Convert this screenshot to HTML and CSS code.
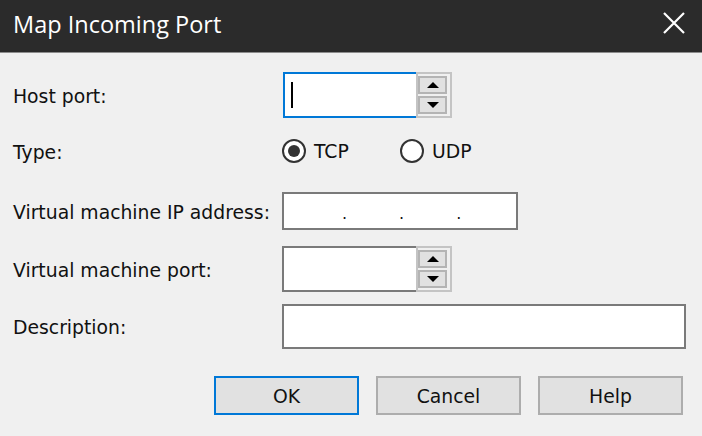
FILE: index.html
```html
<!DOCTYPE html>
<html>
<head>
<meta charset="utf-8">
<link rel="stylesheet" href="styles.css">
</head>
<body>
<div class="dialog">
  <div class="titlebar">
    <span class="title">Map Incoming Port</span>
    <svg class="close" width="22" height="22" viewBox="0 0 22 22"><path d="M1 1L21 21M21 1L1 21" stroke="#ffffff" stroke-width="2.2" fill="none"/></svg>
  </div>
  <div class="form">
    <div class="row r1">
      <span class="label">Host port:</span>
      <div class="spin host">
        <div class="field focus"><span class="caret"></span></div>
        <div class="spinbox">
          <div class="sbtn"><span class="up"></span></div>
          <div class="sbtn"><span class="down"></span></div>
        </div>
      </div>
    </div>
    <div class="row r2">
      <span class="label">Type:</span>
      <div class="radios">
        <div class="radio first"><span class="circle checked"></span><span>TCP</span></div>
        <div class="radio"><span class="circle"></span><span>UDP</span></div>
      </div>
    </div>
    <div class="row r3">
      <span class="label">Virtual machine IP address:</span>
      <div class="ipfield"><span class="dot">.</span><span class="dot">.</span><span class="dot">.</span></div>
    </div>
    <div class="row r4">
      <span class="label">Virtual machine port:</span>
      <div class="spin">
        <div class="field"></div>
        <div class="spinbox">
          <div class="sbtn"><span class="up"></span></div>
          <div class="sbtn"><span class="down"></span></div>
        </div>
      </div>
    </div>
    <div class="row r5">
      <span class="label">Description:</span>
      <div class="descfield"></div>
    </div>
    <div class="buttons">
      <div class="btn default">OK</div>
      <div class="btn">Cancel</div>
      <div class="btn">Help</div>
    </div>
  </div>
</div>
</body>
</html>
```

FILE: styles.css
```css
html, body {
  margin: 0;
  padding: 0;
}
body {
  width: 702px;
  height: 436px;
  overflow: hidden;
  background: #f0f0f0;
  font-family: "DejaVu Sans", sans-serif;
  font-size: 18.8px;
  color: #111;
}
.dialog {
  display: flex;
  flex-direction: column;
  height: 436px;
}
.titlebar {
  height: 53px;
  background: #2b2b2b;
  border-bottom: 1px solid #8c8c8c;
  display: flex;
  align-items: center;
  justify-content: space-between;
  padding: 0 17px 0 13px;
  box-sizing: border-box;
  flex: none;
}
.title {
  font-family: "Open Sans", sans-serif;
  font-size: 23.5px;
  color: #ffffff;
  margin-top: -4px;
}
.close {
  margin-top: -6px;
}
.form {
  padding: 19px 0 0 13px;
  display: flex;
  flex-direction: column;
}
.row {
  display: flex;
  align-items: center;
}
.label {
  width: 269px;
  flex: none;
  padding-top: 2px;
}
.r1 { height: 46px; }
.r2 { height: 24px; margin-top: 21px; }
.r3 { height: 38px; margin-top: 29px; }
.r4 { height: 46px; margin-top: 16px; }
.r5 { height: 45px; margin-top: 12px; }

.spin {
  display: flex;
  width: 170px;
  height: 46px;
}
.spin.host {
  width: 169px;
  margin-left: 1px;
}
.field {
  flex: 1;
  background: #fff;
  border: 2px solid #7a7a7a;
  border-right: none;
  display: flex;
  align-items: center;
  padding-left: 6px;
}
.field.focus {
  border-color: #0078d7;
}
.caret {
  width: 2px;
  height: 26px;
  background: #000;
}
.spinbox {
  width: 36px;
  box-sizing: border-box;
  border: 2px solid #c4c4c4;
  background: #f0f0f0;
  padding: 2px 3px 2px 0;
  display: flex;
  flex-direction: column;
  justify-content: space-between;
}
.sbtn {
  height: 18px;
  box-sizing: border-box;
  background: #e1e1e1;
  border: 2px solid #b4b4b4;
  display: flex;
  align-items: center;
  justify-content: center;
}
.up {
  width: 0;
  height: 0;
  border-left: 6px solid transparent;
  border-right: 6px solid transparent;
  border-bottom: 6px solid #000;
}
.down {
  width: 0;
  height: 0;
  border-left: 6px solid transparent;
  border-right: 6px solid transparent;
  border-top: 6px solid #000;
}
.radios {
  display: flex;
  align-items: center;
}
.radio {
  display: flex;
  align-items: center;
  gap: 8px;
}
.radio.first {
  width: 118px;
}
.circle {
  width: 24px;
  height: 24px;
  box-sizing: border-box;
  border: 2px solid #333;
  border-radius: 50%;
  background: #fff;
  display: flex;
  align-items: center;
  justify-content: center;
}
.circle.checked::after {
  content: "";
  width: 12px;
  height: 12px;
  border-radius: 50%;
  background: #333;
}
.ipfield {
  width: 236px;
  height: 38px;
  box-sizing: border-box;
  background: #fff;
  border: 2px solid #7a7a7a;
  display: flex;
  align-items: center;
  padding-left: 58px;
  gap: 52px;
}
.dot {
  font-size: 16px;
  line-height: 1;
  margin-top: 6px;
}
.descfield {
  width: 404px;
  height: 45px;
  box-sizing: border-box;
  background: #fff;
  border: 2px solid #7a7a7a;
}
.buttons {
  display: flex;
  justify-content: flex-end;
  gap: 17px;
  margin-top: 27px;
  padding-right: 19px;
}
.btn {
  width: 145px;
  height: 39px;
  box-sizing: border-box;
  background: #e1e1e1;
  border: 2px solid #adadad;
  display: flex;
  align-items: center;
  justify-content: center;
  padding-top: 2px;
}
.btn.default {
  border-color: #0078d7;
}
```
